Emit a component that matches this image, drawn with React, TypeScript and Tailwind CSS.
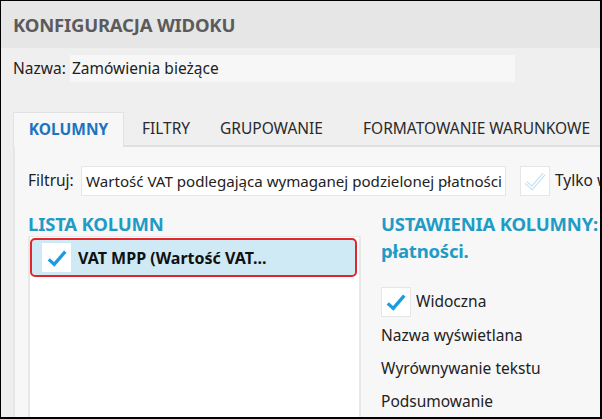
import React from "react";

const Check = ({ color, size = 22 }: { color: string; size?: number }) => (
  <svg width={size} height={size} viewBox="0 0 24 24" fill="none">
    <path d="M3 13.5 L9 19 L21 5" stroke={color} strokeWidth="3.6" strokeLinecap="butt" strokeLinejoin="miter" />
  </svg>
);

const OutlineCheck = () => (
  <svg width="24" height="24" viewBox="0 0 24 24" fill="none">
    <path d="M3 13.5 L9 19 L21 5" stroke="#b9dff1" strokeWidth="3.6" />
    <path d="M3 13.5 L9 19 L21 5" stroke="#ffffff" strokeWidth="1.6" />
  </svg>
);

export default function App() {
  const font = { fontFamily: '"Noto Sans", "Open Sans", sans-serif' };
  return (
    <div
      className="w-[602px] h-[419px] overflow-hidden border-black border-l border-t border-r-2 border-b-2 bg-[#efefef] flex flex-col"
      style={font}
    >
      <div className="h-[47px] shrink-0 bg-[#e6e6e6] flex items-center pl-[12px]">
        <span className="text-[18.5px] font-bold text-[#5b5b5b] tracking-[-0.2px] whitespace-nowrap">KONFIGURACJA WIDOKU</span>
      </div>
      <div className="flex items-center mt-[7px] pl-[12px] h-[27px] shrink-0 whitespace-nowrap">
        <span className="text-[15.5px] text-[#222] w-[57px] shrink-0">Nazwa:</span>
        <div className="w-[445px] shrink-0 h-[27px] bg-[#f7f7f7] flex items-center pl-[2px] text-[15.5px] text-[#222]">
          Zamówienia bieżące
        </div>
      </div>
      <div className="flex mt-[30px] pl-[12px] h-[35px] items-stretch shrink-0">
        <div className="w-[111px] shrink-0 bg-[#f7f7f7] border-l border-t border-r border-[#e2e2e2] flex items-center justify-center text-[15.5px] font-bold text-[#1c74bf]">
          KOLUMNY
        </div>
        <div className="flex-1 flex items-center border-b-2 border-[#e0e0e0] text-[15.5px] text-[#2a2a2a] whitespace-nowrap overflow-hidden">
          <span className="ml-[18px] w-[78px] shrink-0">FILTRY</span>
          <span className="w-[143px] shrink-0">GRUPOWANIE</span>
          <span className="shrink-0">FORMATOWANIE WARUNKOWE</span>
        </div>
      </div>
      <div className="flex-1 ml-[12px] bg-[#f7f7f7] border-l-2 border-[#e6e6e6] flex flex-col min-h-0 overflow-hidden">
        <div className="flex items-center mt-[19px] h-[30px] pl-[13px] whitespace-nowrap shrink-0">
          <span className="text-[15.5px] text-[#222] w-[53px] shrink-0">Filtruj:</span>
          <div className="w-[425px] shrink-0 h-[30px] bg-white border border-[#e6e6e6] flex items-center pl-[4px] text-[15.1px] text-[#222] overflow-hidden">
            Wartość VAT podlegająca wymaganej podzielonej płatności
          </div>
          <div className="ml-[14px] shrink-0 w-[30px] h-[30px] bg-white border border-[#e6e6e6] flex items-center justify-center">
            <OutlineCheck />
          </div>
          <span className="ml-[5px] shrink-0 text-[15.5px] text-[#222]">Tylko widoczne</span>
        </div>
        <div className="flex flex-1 mt-[17px] min-h-0">
          <div className="w-[346px] shrink-0 pl-[13px] flex flex-col">
            <div className="text-[18.5px] font-bold text-[#1e9cc6] leading-[22px] tracking-[-0.2px] whitespace-nowrap">LISTA KOLUMN</div>
            <div className="flex-1 mt-[1px] bg-white border-l-2 border-r-2 border-t border-[#e8e8e8] pt-[1px] pl-[0px] pr-[2px]">
              <div className="h-[39px] rounded-[5px] border-2 border-[#e2262b] bg-[#cfe9f5] flex items-center pl-[10px]">
                <div className="w-[29px] h-[29px] shrink-0 bg-white flex items-center justify-center">
                  <Check color="#1b9be0" />
                </div>
                <span className="ml-[7px] text-[16px] font-bold text-[#111] whitespace-nowrap">VAT MPP (Wartość VAT...</span>
              </div>
            </div>
          </div>
          <div className="flex-1 pl-[20px] flex flex-col whitespace-nowrap overflow-hidden">
            <div className="text-[18.5px] font-bold text-[#1e9cc6] leading-[24px] -mt-[1px] tracking-[-0.2px]">
              <div>USTAWIENIA KOLUMNY:</div>
              <div className="mt-[3px]">płatności.</div>
            </div>
            <div className="flex items-center mt-[24px] h-[30px] shrink-0">
              <div className="w-[30px] h-[30px] shrink-0 bg-white border border-[#e6e6e6] flex items-center justify-center">
                <Check color="#1b9be0" />
              </div>
              <span className="ml-[5px] text-[15.5px] text-[#222]">Widoczna</span>
            </div>
            <div className="mt-[2px] text-[15.5px] text-[#222] leading-[33px]">Nazwa wyświetlana</div>
            <div className="text-[15.5px] text-[#222] leading-[33px]">Wyrównywanie tekstu</div>
            <div className="text-[15.5px] text-[#222] leading-[33px]">Podsumowanie</div>
          </div>
        </div>
      </div>
    </div>
  );
}
